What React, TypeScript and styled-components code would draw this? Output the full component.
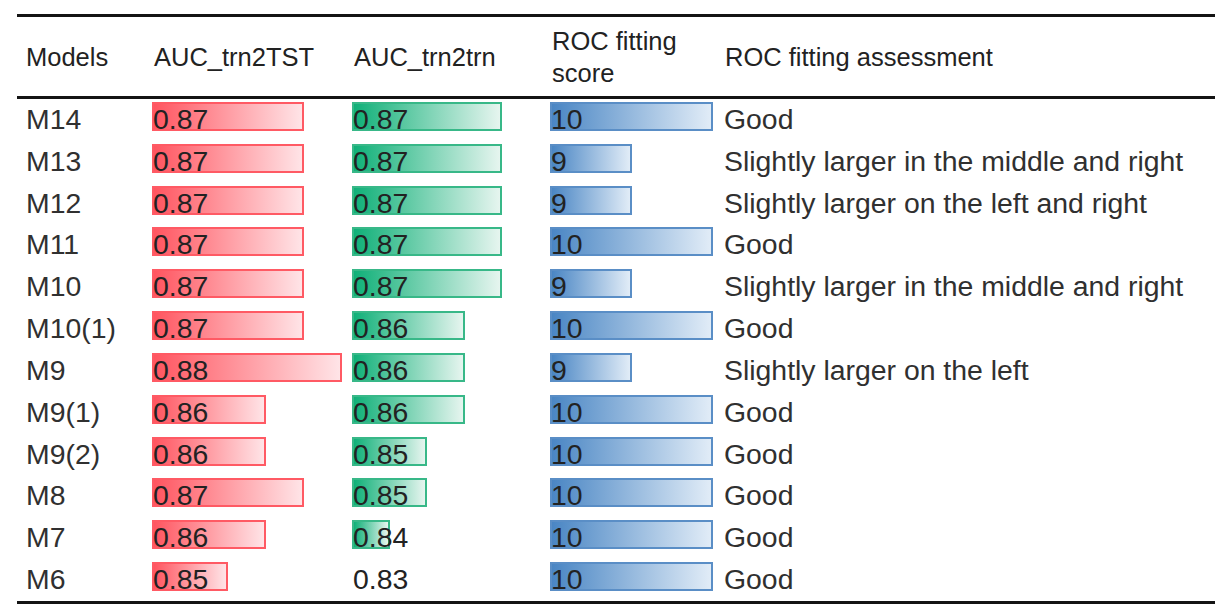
import styled, { createGlobalStyle } from "styled-components";

const GlobalStyle = createGlobalStyle`
    body {
        margin: 0;
        background: #fff;
        font-family: "Liberation Sans", Arial, sans-serif;
        color: #303030;
    }
`;

type Tone = "red" | "green" | "blue";

const tones: Record<Tone, { border: string; from: string; to: string }> = {
    red: { border: "#ff5a64", from: "#ff5560", to: "#ffe4e7" },
    green: { border: "#38b888", from: "#10b078", to: "#e6f5ef" },
    blue: { border: "#5a8ec6", from: "#4a86c4", to: "#e1ecf7" },
};

const COLUMNS = "126px 200px 198px 174px 1fr";

const Table = styled.div`
    margin: 14px 0 0 17px;
    width: 1198px;
    border-top: 3px solid #141414;
    border-bottom: 3px solid #141414;
`;

const HeadRow = styled.div`
    display: grid;
    grid-template-columns: ${COLUMNS};
    align-items: center;
    height: 79px;
    padding-left: 9px;
    border-bottom: 3px solid #141414;
    font-size: 25.5px;
    line-height: 32px;
    color: #222;
`;

const HeadCell = styled.div<{ $shift?: number }>`
    padding-left: ${(p) => p.$shift ?? 0}px;
    white-space: nowrap;
`;

const Row = styled.div`
    display: grid;
    grid-template-columns: ${COLUMNS};
    align-items: start;
    height: 41.83px;
    box-sizing: border-box;
    padding: 3px 0 0 9px;
    font-size: 28.4px;
    line-height: 29px;
`;

const Cell = styled.div`
    padding-top: 3px;
    white-space: nowrap;
`;

const BarCell = styled.div`
    position: relative;
    height: 29px;
`;

const Bar = styled.div<{ $tone: Tone }>`
    position: absolute;
    left: 0;
    top: 0;
    height: 29px;
    box-sizing: border-box;
    border: 2.5px solid ${(p) => tones[p.$tone].border};
    background: linear-gradient(
        90deg,
        ${(p) => tones[p.$tone].from} 0%,
        ${(p) => tones[p.$tone].to} 100%
    );
`;

const BarValue = styled.span`
    position: relative;
    display: block;
    padding: 3px 0 0 1px;
    color: #222;
`;

type Model = {
    name: string;
    tst: number;
    trn: number;
    score: number;
    note: string;
};

const models: Model[] = [
    { name: "M14", tst: 0.87, trn: 0.87, score: 10, note: "Good" },
    { name: "M13", tst: 0.87, trn: 0.87, score: 9, note: "Slightly larger in the middle and right" },
    { name: "M12", tst: 0.87, trn: 0.87, score: 9, note: "Slightly larger on the left and right" },
    { name: "M11", tst: 0.87, trn: 0.87, score: 10, note: "Good" },
    { name: "M10", tst: 0.87, trn: 0.87, score: 9, note: "Slightly larger in the middle and right" },
    { name: "M10(1)", tst: 0.87, trn: 0.86, score: 10, note: "Good" },
    { name: "M9", tst: 0.88, trn: 0.86, score: 9, note: "Slightly larger on the left" },
    { name: "M9(1)", tst: 0.86, trn: 0.86, score: 10, note: "Good" },
    { name: "M9(2)", tst: 0.86, trn: 0.85, score: 10, note: "Good" },
    { name: "M8", tst: 0.87, trn: 0.85, score: 10, note: "Good" },
    { name: "M7", tst: 0.86, trn: 0.84, score: 10, note: "Good" },
    { name: "M6", tst: 0.85, trn: 0.83, score: 10, note: "Good" },
];

const aucWidth = (v: number, perHundredth: number) => Math.round((v - 0.83) * 100 * perHundredth * 10) / 10;
const scoreWidth = (s: number) => (s - 8) * 81.5;

function DataBar({ tone, width, label }: { tone: Tone; width: number; label: string }) {
    return (
        <BarCell>
            {width > 0 && <Bar $tone={tone} style={{ width }} />}
            <BarValue>{label}</BarValue>
        </BarCell>
    );
}

export default function App() {
    return (
        <>
            <GlobalStyle />
            <Table>
                <HeadRow>
                    <HeadCell>Models</HeadCell>
                    <HeadCell $shift={2}>AUC_trn2TST</HeadCell>
                    <HeadCell $shift={2}>AUC_trn2trn</HeadCell>
                    <HeadCell $shift={2}>
                        ROC fitting
                        <br />
                        score
                    </HeadCell>
                    <HeadCell $shift={1}>ROC fitting assessment</HeadCell>
                </HeadRow>
                {models.map((m) => (
                    <Row key={m.name}>
                        <Cell>{m.name}</Cell>
                        <DataBar tone="red" width={aucWidth(m.tst, 38)} label={m.tst.toFixed(2)} />
                        <DataBar tone="green" width={aucWidth(m.trn, 37.5)} label={m.trn.toFixed(2)} />
                        <DataBar tone="blue" width={scoreWidth(m.score)} label={String(m.score)} />
                        <Cell>{m.note}</Cell>
                    </Row>
                ))}
            </Table>
        </>
    );
}
